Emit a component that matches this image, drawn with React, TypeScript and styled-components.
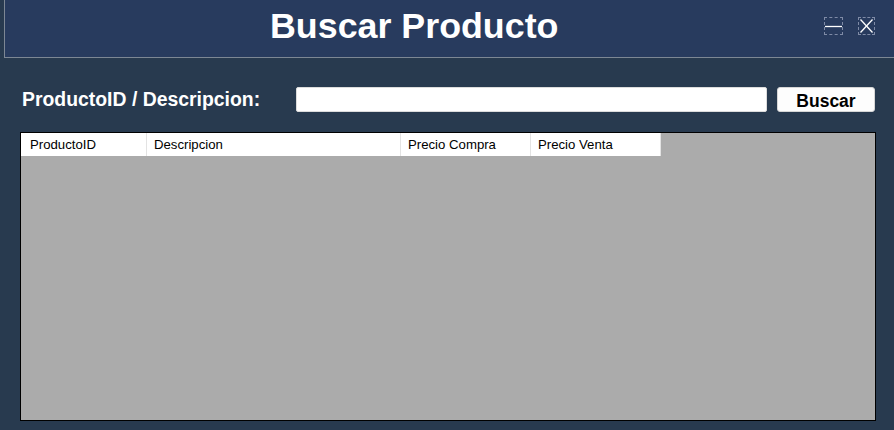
import React from "react";
import styled, { createGlobalStyle } from "styled-components";

const Global = createGlobalStyle`
  html, body { margin: 0; padding: 0; background: #283a4f; }
  body { font-family: "Liberation Sans", Arial, sans-serif; }
`;

const Window = styled.div`
  width: 894px;
  height: 430px;
  background: #283a4f;
  display: flex;
  flex-direction: column;
  overflow: hidden;
`;

const TitleBar = styled.header`
  margin-left: 4px;
  height: 57px;
  background: #283b5e;
  border-left: 1px solid #7d8794;
  border-bottom: 1px solid #7d8794;
  display: flex;
  align-items: center;
  padding-left: 265px;
  box-sizing: content-box;
`;

const Title = styled.h1`
  margin: 0;
  font-family: "Liberation Sans", Arial, sans-serif;
  font-weight: 700;
  font-size: 35.8px;
  color: #ffffff;
  flex: 1;
  line-height: 1;
  padding-bottom: 4px;
`;

const Controls = styled.div`
  display: flex;
  align-items: center;
  gap: 15px;
  margin-right: 19px;
  margin-bottom: 5px;
`;

const CtrlBox = styled.div<{ $w: number }>`
  width: ${(p) => p.$w}px;
  height: 16px;
  border: 1px dashed #7f8ba6;
  display: flex;
  align-items: center;
  justify-content: center;
`;

const SearchRow = styled.div`
  display: flex;
  align-items: center;
  margin-top: 29px;
  padding-left: 22px;
`;

const Label = styled.label`
  width: 274px;
  color: #ffffff;
  font-weight: 700;
  font-size: 19.4px;
`;

const Input = styled.input`
  width: 471px;
  height: 25px;
  box-sizing: border-box;
  border: 1px solid #dcdcdc;
  border-radius: 2px;
  background: #ffffff;
  outline: none;
  padding: 0 4px;
`;

const Button = styled.button`
  margin-left: 10px;
  width: 98px;
  height: 25px;
  box-sizing: border-box;
  border: 1px solid #d6d6d6;
  border-radius: 3px;
  background: #fdfdfd;
  color: #000;
  font-family: "Liberation Sans", Arial, sans-serif;
  font-weight: 700;
  font-size: 17.5px;
  padding: 3px 0 0;
  display: flex;
  align-items: center;
  justify-content: center;
`;

const Grid = styled.div`
  margin: 20px 0 0 20px;
  width: 856px;
  height: 289px;
  box-sizing: border-box;
  border: 1px solid #000;
  background: #ababab;
`;

const HeaderRow = styled.div`
  display: flex;
  height: 23px;
`;

const HeaderCell = styled.div<{ $w: number; $pad: number }>`
  width: ${(p) => p.$w}px;
  box-sizing: border-box;
  background: #ffffff;
  border-right: 1px solid #e3e3e3;
  padding-left: ${(p) => p.$pad}px;
  display: flex;
  align-items: center;
  font-size: 13.2px;
  color: #000;
`;

const columns: [string, number, number][] = [
  ["ProductoID", 126, 9],
  ["Descripcion", 254, 7],
  ["Precio Compra", 130, 7],
  ["Precio Venta", 130, 7],
];

export default function App() {
  return (
    <>
      <Global />
      <Window>
        <TitleBar>
          <Title>Buscar Producto</Title>
          <Controls>
            <CtrlBox $w={17}>
              <svg width="17" height="16" viewBox="0 0 17 16">
                <line x1="0" y1="8.5" x2="17" y2="8.5" stroke="#ffffff" strokeWidth="1.3" />
              </svg>
            </CtrlBox>
            <CtrlBox $w={15}>
              <svg width="15" height="16" viewBox="0 0 15 16">
                <line x1="1.5" y1="1.5" x2="13.5" y2="14.5" stroke="#ffffff" strokeWidth="1.3" />
                <line x1="13.5" y1="1.5" x2="1.5" y2="14.5" stroke="#ffffff" strokeWidth="1.3" />
              </svg>
            </CtrlBox>
          </Controls>
        </TitleBar>
        <SearchRow>
          <Label>ProductoID / Descripcion:</Label>
          <Input />
          <Button>Buscar</Button>
        </SearchRow>
        <Grid>
          <HeaderRow>
            {columns.map(([name, w, pad]) => (
              <HeaderCell key={name} $w={w} $pad={pad}>
                {name}
              </HeaderCell>
            ))}
          </HeaderRow>
        </Grid>
      </Window>
    </>
  );
}
